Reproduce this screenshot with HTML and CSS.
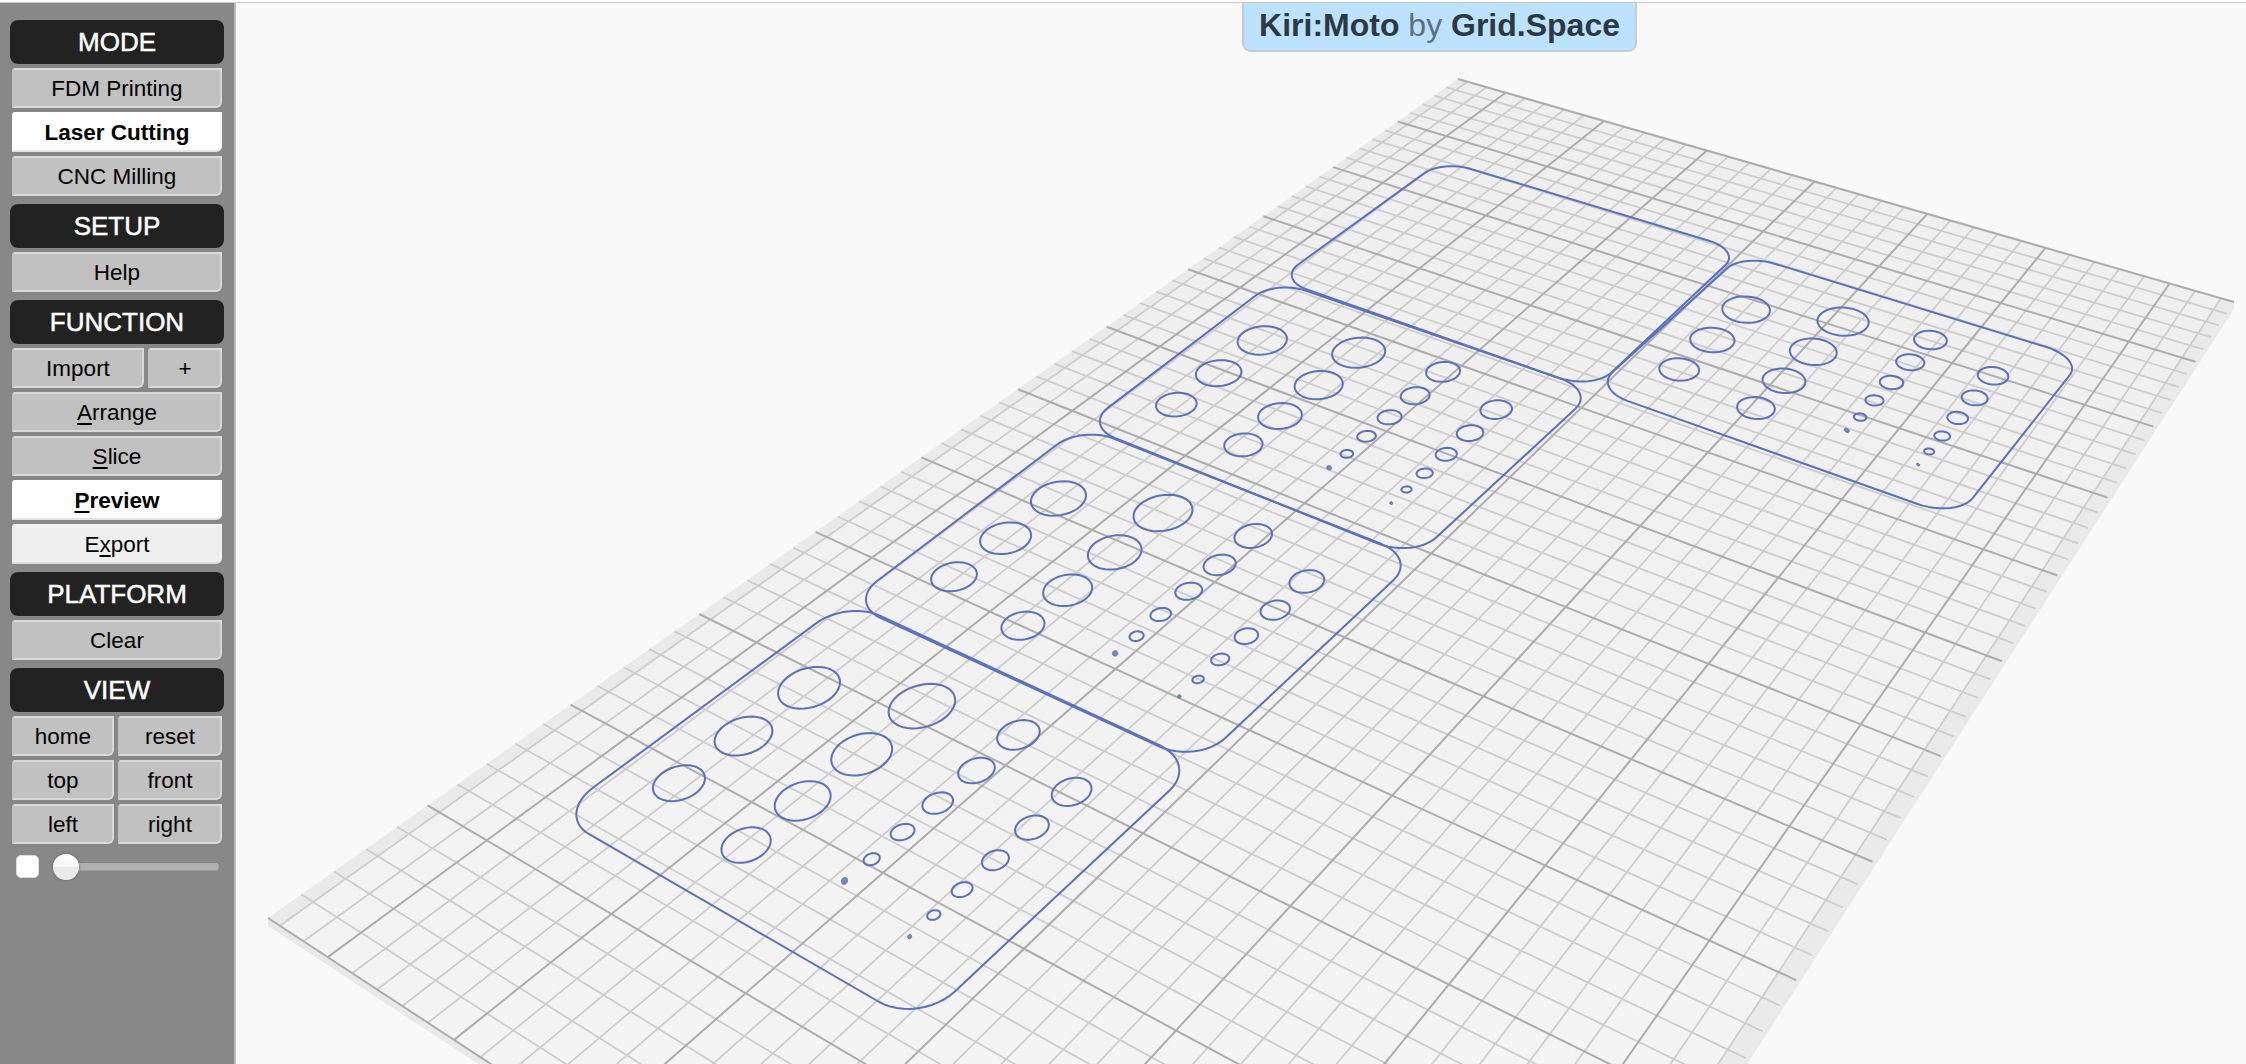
FILE: index.html
```html
<!DOCTYPE html>
<html lang="en">
<head>
<meta charset="utf-8">
<title>Kiri:Moto by Grid.Space</title>
<link rel="stylesheet" href="styles.css">
</head>
<body>
<div class="app">
  <nav class="sidebar">
    <section class="group">
      <h2 class="head">MODE</h2>
      <button class="btn">FDM Printing</button>
      <button class="btn on">Laser Cutting</button>
      <button class="btn">CNC Milling</button>
    </section>
    <section class="group">
      <h2 class="head">SETUP</h2>
      <button class="btn">Help</button>
    </section>
    <section class="group">
      <h2 class="head">FUNCTION</h2>
      <div class="row row-import">
        <button class="btn">Import</button>
        <button class="btn">+</button>
      </div>
      <button class="btn"><u>A</u>rrange</button>
      <button class="btn"><u>S</u>lice</button>
      <button class="btn on"><u>P</u>review</button>
      <button class="btn pale">E<u>x</u>port</button>
    </section>
    <section class="group">
      <h2 class="head">PLATFORM</h2>
      <button class="btn">Clear</button>
    </section>
    <section class="group">
      <h2 class="head">VIEW</h2>
      <div class="row row-view">
        <button class="btn">home</button>
        <button class="btn">reset</button>
      </div>
      <div class="row row-view">
        <button class="btn">top</button>
        <button class="btn">front</button>
      </div>
      <div class="row row-view">
        <button class="btn">left</button>
        <button class="btn">right</button>
      </div>
      <div class="layer">
        <input class="check" type="checkbox" aria-label="show layers">
        <input class="slider" type="range" min="0" max="100" value="0" aria-label="layer">
      </div>
    </section>
  </nav>
  <main class="canvas">
    <svg id="scene" class="scene" viewBox="236 3 2010 1061" preserveAspectRatio="xMinYMin slice" aria-label="3D platform with laser cut parts"></svg>
    <div class="title"><b>Kiri:Moto</b> <span class="by">by</span> <b>Grid.Space</b></div>
  </main>
</div>
<script src="diagram.js"></script>
</body>
</html>
```
FILE: styles.css
```css
* { box-sizing: border-box; }
html, body { margin: 0; height: 100%; overflow: hidden; background: #f9f9f9; }
body { padding-top: 2px; background: #fff; font-family: "Liberation Sans", Arial, sans-serif; }
.app {
  display: flex;
  height: 100%;
  border-top: 1px solid #c8c8c8;
}
.sidebar {
  flex: 0 0 236px;
  display: flex;
  flex-direction: column;
  gap: 8px;
  padding: 17px 12px 0;
  background: #888;
  border-right: 2px solid #bbb;
}
.group { display: flex; flex-direction: column; gap: 4px; }
.head {
  flex: none;
  margin: 0 -2px;
  height: 44px;
  background: #222;
  border-radius: 8px;
  color: #fff;
  font-size: 26px;
  font-weight: 400;
  line-height: 44px;
  text-align: center;
  -webkit-text-stroke: 0.5px #fff;
}
.btn {
  flex: none;
  display: block;
  width: 100%;
  height: 40px;
  padding: 0;
  background: #c1c1c1;
  border: 2px solid #d9d9d9;
  border-left-color: #c1c1c1;
  border-radius: 3px 0 6px 0;
  color: #000;
  font: 22.5px/35px "Liberation Sans", Arial, sans-serif;
  text-align: center;
}
.btn u { text-decoration-thickness: 2px; text-underline-offset: 3px; }
.btn.on { background: #fff; border-color: #fff; border-bottom-color: #e4e4e4; font-weight: 700; }
.btn.pale { background: #eee; border-color: #f2f2f2; border-left-color: #eee; border-bottom-color: #ddd; }
.row { display: flex; gap: 4px; }
.row .btn { flex: 1 1 0; min-width: 0; }
.row-import .btn:first-child { flex: 0 0 132px; }
.row-view .btn:first-child { flex: 0 0 102px; }
.layer { display: flex; align-items: center; gap: 13px; height: 30px; margin-top: 3px; padding-left: 4px; }
.check {
  appearance: none;
  -webkit-appearance: none;
  flex: none;
  width: 23px;
  height: 23px;
  margin: 0;
  background: #fff;
  border: 1px solid #ddd;
  border-radius: 5px;
}
.slider {
  appearance: none;
  -webkit-appearance: none;
  flex: none;
  width: 168px;
  height: 26px;
  margin: 0;
  background: transparent;
}
.slider::-webkit-slider-runnable-track {
  height: 9px;
  background: #b0b0b0;
  border: 1px solid #808080;
  border-bottom-color: #9c9c9c;
  border-radius: 5px;
}
.slider::-webkit-slider-thumb {
  -webkit-appearance: none;
  width: 26px;
  height: 26px;
  margin-top: -9px;
  background: linear-gradient(#fff 0, #f6f6f6 50%, #e6e6e6 51%, #eee 100%);
  border: 0;
  border-radius: 50%;
  box-shadow: 0 0 3px #666;
}
.canvas { position: relative; flex: 1 1 auto; min-width: 0; background: #f9f9f9; overflow: hidden; }
.scene { display: block; width: 100%; height: 100%; filter: blur(0.7px); }
.title {
  position: absolute;
  top: 0;
  left: 1006px;
  width: 395px;
  height: 49px;
  background: #bde2ff;
  border: 2px solid #c8ccd0;
  border-top: 0;
  border-radius: 0 0 9px 9px;
  color: #2c3842;
  font-size: 32px;
  line-height: 44px;
  text-align: center;
  white-space: nowrap;
}
.title b { font-weight: 700; }
.title .by { color: #5f7080; }
.p-side { fill: #e9e9e9; stroke: none; }
.p-top { stroke: none; }
.p-band { fill: #eaeaea; stroke: none; }
.g-minor { stroke: #cdcdcd; stroke-width: 1.8; }
.g-major { stroke: #adadad; stroke-width: 2; }
.part { fill: none; stroke: #5a72bb; stroke-width: 2; stroke-linejoin: round; }
.dot { fill: #7488c6; stroke: #5a72bb; stroke-width: 1; }
```
FILE: diagram.js
```js
(function () {
  var NS = 'http://www.w3.org/2000/svg';
  var svg = document.getElementById('scene');

  function el(name, attrs) {
    var e = document.createElementNS(NS, name);
    for (var k in attrs) e.setAttribute(k, attrs[k]);
    svg.appendChild(e);
    return e;
  }

  // Projective map of the unit square onto a quad: (0,0) (1,0) (1,1) (0,1)
  function quad(p0, p1, p2, p3) {
    var dx1 = p1[0] - p2[0], dx2 = p3[0] - p2[0], sx = p0[0] - p1[0] + p2[0] - p3[0];
    var dy1 = p1[1] - p2[1], dy2 = p3[1] - p2[1], sy = p0[1] - p1[1] + p2[1] - p3[1];
    var den = dx1 * dy2 - dx2 * dy1;
    var g = (sx * dy2 - dx2 * sy) / den, h = (dx1 * sy - sx * dy1) / den;
    return [
      p1[0] - p0[0] + g * p1[0], p3[0] - p0[0] + h * p3[0], p0[0],
      p1[1] - p0[1] + g * p1[1], p3[1] - p0[1] + h * p3[1], p0[1],
      g, h, 1
    ];
  }
  function apply(m, u, v) {
    var w = m[6] * u + m[7] * v + m[8];
    return [(m[0] * u + m[1] * v + m[2]) / w, (m[3] * u + m[4] * v + m[5]) / w];
  }
  function invert(m) {
    return [
      m[4] * m[8] - m[5] * m[7], m[2] * m[7] - m[1] * m[8], m[1] * m[5] - m[2] * m[4],
      m[5] * m[6] - m[3] * m[8], m[0] * m[8] - m[2] * m[6], m[2] * m[3] - m[0] * m[5],
      m[3] * m[7] - m[4] * m[6], m[1] * m[6] - m[0] * m[7], m[0] * m[4] - m[1] * m[3]
    ];
  }
  function pts(list) {
    return list.map(function (p) { return p[0].toFixed(2) + ',' + p[1].toFixed(2); }).join(' ');
  }

  // Platform
  var A = [1458, 79], B = [2234, 302], C = [1370, 1640], D = [268, 918];
  var P = quad(A, B, C, D);
  var CELLS_U = 35, CELLS_V = 60;

  var defs = el('defs', {});
  var grad = document.createElementNS(NS, 'linearGradient');
  grad.setAttribute('id', 'bed');
  grad.setAttribute('gradientUnits', 'userSpaceOnUse');
  grad.setAttribute('x1', '0'); grad.setAttribute('y1', '80');
  grad.setAttribute('x2', '0'); grad.setAttribute('y2', '1064');
  [['0', '#eeeeee'], ['1', '#f4f4f4']].forEach(function (s) {
    var st = document.createElementNS(NS, 'stop');
    st.setAttribute('offset', s[0]); st.setAttribute('stop-color', s[1]);
    grad.appendChild(st);
  });
  defs.appendChild(grad);

  function shift(p, dy) { return [p[0], p[1] + dy]; }
  el('polygon', { 'class': 'p-side', points: pts([D, C, shift(C, 9), shift(D, 8)]) });
  el('polygon', { 'class': 'p-side', points: pts([B, C, shift(C, 9), shift(B, 7)]) });
  el('polygon', { 'class': 'p-top', fill: 'url(#bed)', points: pts([A, B, C, D]) });

  var edge = 0.5 / CELLS_U;
  el('polygon', { 'class': 'p-band', points: pts([apply(P, 0, 0), apply(P, edge, 0), apply(P, edge, 1), apply(P, 0, 1)]) });
  el('polygon', { 'class': 'p-band', points: pts([apply(P, 1, 0), apply(P, 1 - edge, 0), apply(P, 1 - edge, 1), apply(P, 1, 1)]) });

  function gridLine(a, b, cls) {
    el('line', { 'class': cls, x1: a[0].toFixed(2), y1: a[1].toFixed(2), x2: b[0].toFixed(2), y2: b[1].toFixed(2) });
  }
  var i, u, v, minors = [], majors = [];
  for (i = 0; i < CELLS_U; i++) {
    u = (i + 0.5) / CELLS_U;
    ((i - 2) % 5 === 0 ? majors : minors).push([apply(P, u, 0), apply(P, u, 1)]);
  }
  for (i = 0; i <= CELLS_V; i++) {
    v = i / CELLS_V;
    (i % 5 === 0 ? majors : minors).push([apply(P, 0, v), apply(P, 1, v)]);
  }
  minors.forEach(function (l) { gridLine(l[0], l[1], 'g-minor'); });
  majors.forEach(function (l) { gridLine(l[0], l[1], 'g-major'); });

  // Parts: corners are left, top, right, bottom of each sheet as seen on screen
  var SRC = [[853.67, 601], [1081.53, 426], [1413, 557.93], [1197.57, 761.17]];
  var PARTS = [
    { q: [[1277.7, 279.3], [1442.2, 160.3], [1741, 250.4], [1593.2, 389.8]], holes: false },
    { q: [[1084.3, 425.7], [1275.7, 280.3], [1595, 390.5], [1414.1, 558]], holes: true },
    { q: [[848, 603], [1081.53, 426], [1417, 557.93], [1197.57, 764]], holes: true },
    { q: [[556, 815], [847, 600.6], [1198.5, 763.3], [919, 1025]], holes: true },
    { q: [[1594, 389], [1743, 254], [2083, 358.3], [1957, 518]], holes: true }
  ];

  // Holes as measured on the reference sheet: x, y, rx, ry (3x zoom units from 850,420)
  var HOLES = [
    [628, 234, 82, 50], [473, 352, 76, 46], [322, 466, 68, 42],
    [937, 278, 88, 53], [795, 395, 80, 50], [657, 507, 73, 46], [526, 612, 64, 41],
    [1204, 347, 56, 35], [1105, 433, 48, 30], [1014, 511, 40, 25], [932, 580, 31, 19], [861, 644, 21, 14], [798, 695, 8, 8],
    [1363, 483, 52, 33], [1270, 568, 44, 28], [1185, 645, 35, 23], [1108, 714, 27, 17], [1043, 773, 17, 11], [988, 823, 5, 5]
  ];
  var TILT = -10 * Math.PI / 180;
  var toSrc = invert(quad(SRC[0], SRC[1], SRC[2], SRC[3]));

  function outline(m) {
    var rs = 0.115, rt = 0.1, out = [];
    function arc(cu, cv, a0) {
      for (var k = 0; k <= 12; k++) {
        var a = a0 + (k / 12) * Math.PI / 2;
        out.push(apply(m, cu + rs * Math.cos(a), cv + rt * Math.sin(a)));
      }
    }
    arc(1 - rs, rt, -Math.PI / 2);
    arc(1 - rs, 1 - rt, 0);
    arc(rs, 1 - rt, Math.PI / 2);
    arc(rs, rt, Math.PI);
    return out;
  }

  PARTS.forEach(function (part) {
    var q = part.q, m = quad(q[0], q[1], q[2], q[3]);
    el('polygon', { 'class': 'part', points: pts(outline(m)) });
    if (!part.holes) return;
    HOLES.forEach(function (h) {
      var cx = 850 + h[0] / 3, cy = 420 + h[1] / 3, rx = h[2] / 3, ry = h[3] / 3, ring = [];
      for (var k = 0; k < 40; k++) {
        var a = k / 40 * 2 * Math.PI;
        var ex = rx * Math.cos(a), ey = ry * Math.sin(a);
        var sx = cx + ex * Math.cos(TILT) - ey * Math.sin(TILT);
        var sy = cy + ex * Math.sin(TILT) + ey * Math.cos(TILT);
        var uv = apply(toSrc, sx, sy);
        ring.push(apply(m, uv[0], uv[1]));
      }
      el('polygon', { 'class': h[2] < 10 ? 'dot' : 'part', points: pts(ring) });
    });
  });
})();
```
